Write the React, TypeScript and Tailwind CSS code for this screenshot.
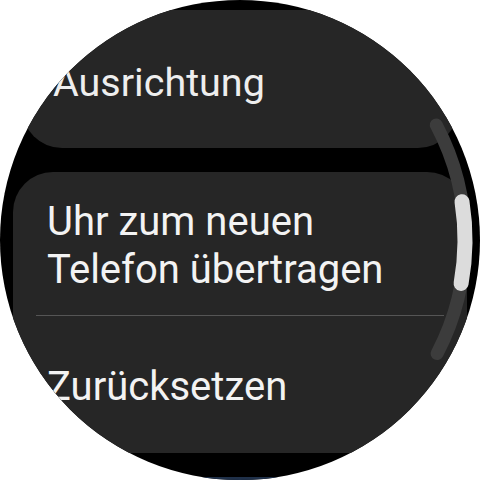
import React from "react";

const font = { fontFamily: "Roboto, 'Noto Sans', sans-serif" };

// point on the scroll arc (centre 220,240 r 245) for an angle in degrees
function pt(deg: number) {
  const r = (deg * Math.PI) / 180;
  return `${(220 + 245 * Math.cos(r)).toFixed(1)} ${(240 + 245 * Math.sin(r)).toFixed(1)}`;
}

function arc(a: number, b: number) {
  return `M ${pt(a)} A 245 245 0 0 1 ${pt(b)}`;
}

function ScrollIndicator() {
  return (
    <svg
      className="pointer-events-none absolute inset-0"
      width="480"
      height="480"
      viewBox="0 0 480 480"
    >
      <path d={arc(-28, 27.6)} stroke="#3c3c3c" strokeWidth="13" strokeLinecap="round" fill="none" />
      <path d={arc(-9, 10.2)} stroke="#dcdcdc" strokeWidth="15" strokeLinecap="round" fill="none" />
    </svg>
  );
}

export default function App() {
  return (
    <div className="h-[480px] w-[480px] bg-white" style={font}>
      <div className="relative h-full w-full overflow-hidden rounded-full bg-black">
        <div className="flex flex-col items-center pt-[10px]">
          {/* Ausrichtung */}
          <div className="flex h-[138px] w-[436px] items-center rounded-b-[40px] bg-[#262626] pl-[31px] pt-[8px]">
            <span className="text-[39.5px] leading-[46px] text-[#eeeeee]">Ausrichtung</span>
          </div>

          {/* grouped card */}
          <div className="mt-[24px] flex w-[454px] flex-col rounded-t-[40px] bg-[#262626]">
            <div className="flex h-[143px] items-center pl-[34px] pt-[4px]">
              <span className="text-[40px] leading-[48px] text-[#f3f3f3]">
                Uhr zum neuen
                <br />
                Telefon übertragen
              </span>
            </div>
            <div className="mx-[23px] h-[1px] bg-[#555555]" />
            <div className="flex h-[137px] items-center pl-[34px] pt-[4px]">
              <span className="text-[40px] leading-[48px] text-[#f3f3f3]">Zurücksetzen</span>
            </div>
          </div>

          {/* next item peeking */}
          <div className="mt-[24px] h-[40px] w-[454px] rounded-t-[40px] bg-[#1f3049]" />
        </div>
        <ScrollIndicator />
      </div>
    </div>
  );
}
